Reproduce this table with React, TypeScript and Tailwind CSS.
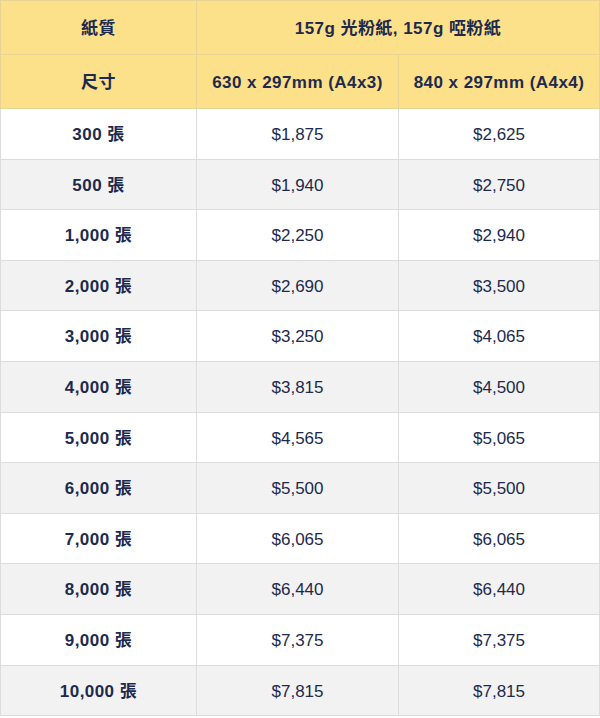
const rows: [string, string, string][] = [
  ["300 張", "$1,875", "$2,625"],
  ["500 張", "$1,940", "$2,750"],
  ["1,000 張", "$2,250", "$2,940"],
  ["2,000 張", "$2,690", "$3,500"],
  ["3,000 張", "$3,250", "$4,065"],
  ["4,000 張", "$3,815", "$4,500"],
  ["5,000 張", "$4,565", "$5,065"],
  ["6,000 張", "$5,500", "$5,500"],
  ["7,000 張", "$6,065", "$6,065"],
  ["8,000 張", "$6,440", "$6,440"],
  ["9,000 張", "$7,375", "$7,375"],
  ["10,000 張", "$7,815", "$7,815"],
];

export default function App() {
  return (
    <div className="w-[600px] bg-white font-['Liberation_Sans','Noto_Sans_CJK_TC',sans-serif] text-[17px] text-[#1d2a4d]">
      <table className="w-full table-fixed border-collapse">
        <colgroup>
          <col className="w-[196px]" />
          <col className="w-[202px]" />
          <col />
        </colgroup>
        <thead>
          <tr className="h-[54px] bg-[#fde08a] font-bold tracking-[0.45px]">
            <th className="border border-[#e8d394] pt-[3px] text-center">紙質</th>
            <th colSpan={2} className="border border-[#e8d394] pt-[3px] text-center">
              157g 光粉紙, 157g 啞粉紙
            </th>
          </tr>
          <tr className="h-[54px] bg-[#fde08a] font-bold tracking-[0.45px]">
            <th className="border border-[#e8d394] pt-[3px] text-center">尺寸</th>
            <th className="border border-[#e8d394] pt-[3px] text-center">630 x 297mm (A4x3)</th>
            <th className="border border-[#e8d394] pt-[3px] text-center">840 x 297mm (A4x4)</th>
          </tr>
        </thead>
        <tbody>
          {rows.map((r, i) => (
            <tr key={r[0]} className={`h-[50.6px] ${i % 2 === 1 ? "bg-[#f2f2f2]" : "bg-white"}`}>
              <td className="border border-[#dcdcdc] pt-[2px] text-center font-bold tracking-[0.45px]">{r[0]}</td>
              <td className="border border-[#dcdcdc] pt-[2px] text-center">{r[1]}</td>
              <td className="border border-[#dcdcdc] pt-[2px] text-center">{r[2]}</td>
            </tr>
          ))}
        </tbody>
      </table>
    </div>
  );
}
